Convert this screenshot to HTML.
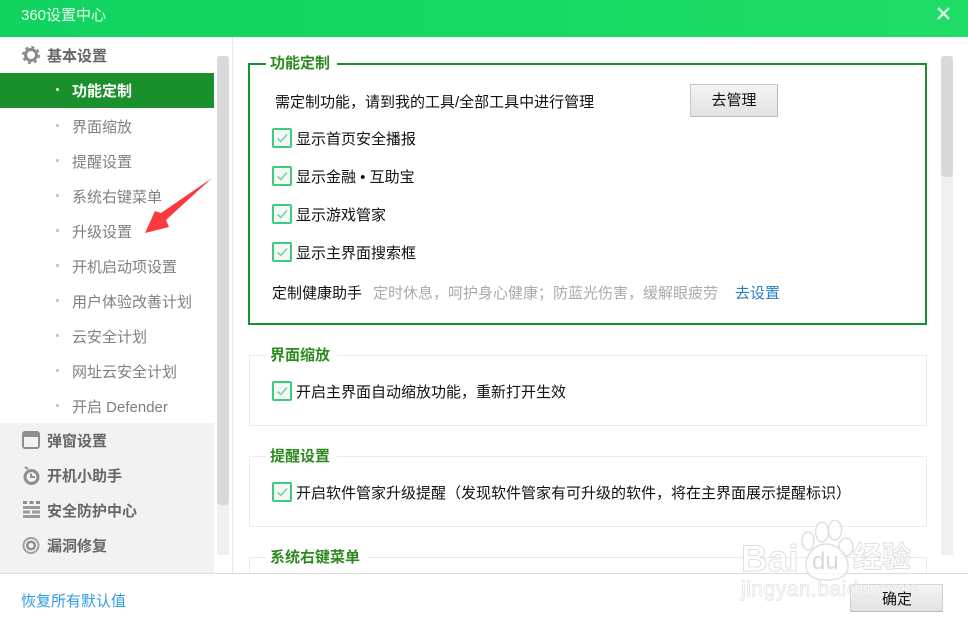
<!DOCTYPE html>
<html lang="zh-CN">
<head>
<meta charset="utf-8">
<style>
html,body{margin:0;padding:0;width:968px;height:622px;overflow:hidden;background:#fff}
body{position:relative;font-family:"Liberation Sans","Noto Sans CJK SC",sans-serif;font-size:15px;color:#111}
.a{position:absolute;white-space:nowrap;line-height:20px}
.r{position:absolute}
.s{color:#7f7f7f;left:72px}
.d{position:absolute;left:56px;width:3px;height:3px;background:#c4c4c4;border-radius:1px}
.h{left:47px;color:#666;font-weight:bold}
.lg{color:#2c8a1e;font-weight:bold;background:#fff;padding:0 7px 0 4px;left:266px}
.box{position:absolute;left:249px;width:676px;border:1px solid #ececec;box-sizing:content-box}
.c{position:absolute;left:272px;width:16px;height:16px;border:2px solid #3ecb7c;border-radius:2px;background:#f7f7f7}
.c svg{position:absolute;left:2px;top:2px}
.t{left:296px}
.btn{position:absolute;box-sizing:border-box;border:1px solid #c4c4c4;background:linear-gradient(#f4f4f4,#e2e2e2);text-align:center;border-radius:1px}
.w{color:rgba(255,255,255,.75);-webkit-text-stroke:1px #e0e0e0}
</style>
</head>
<body>
<div class="r" style="left:0;top:0;width:968px;height:37px;background:linear-gradient(90deg,#10d45f 0%,#15d862 50%,#1fdd66 100%)"></div>
<div class="a" style="left:21px;top:6px;color:#e8fff0">360设置中心</div>
<svg class="r" style="left:936px;top:6px" width="15" height="15" viewBox="0 0 15 15"><path d="M2 2L13 13M13 2L2 13" stroke="#d8f8e4" stroke-width="2.4" fill="none"/></svg>

<!-- sidebar -->
<div class="r" style="left:0;top:423px;width:214px;height:150px;background:#f2f2f2"></div>
<div class="r" style="left:0;top:73px;width:214px;height:35px;background:#19902c"></div>
<div class="r" style="left:217px;top:56px;width:12px;height:499px;background:#f0f0f0"></div>
<div class="r" style="left:217px;top:56px;width:12px;height:449px;background:#d9d9d9;border-radius:4px"></div>
<div class="r" style="left:232px;top:37px;width:1px;height:536px;background:#e8e8e8"></div>

<svg class="r" style="left:22px;top:46px" width="18" height="18" viewBox="0 0 18 18"><circle cx="9" cy="9" r="5.5" fill="none" stroke="#8a8a8a" stroke-width="3"/><circle cx="9" cy="9" r="8" fill="none" stroke="#8a8a8a" stroke-width="2" stroke-dasharray="3 3.3"/></svg>
<div class="a h" style="top:47px">基本设置</div>
<div class="d" style="top:88px;background:#ddd"></div>
<div class="a" style="left:72px;top:82px;color:#fff;font-weight:bold">功能定制</div>
<div class="d" style="top:124px"></div><div class="a s" style="top:118px">界面缩放</div>
<div class="d" style="top:159px"></div><div class="a s" style="top:153px">提醒设置</div>
<div class="d" style="top:194px"></div><div class="a s" style="top:188px">系统右键菜单</div>
<div class="d" style="top:229px"></div><div class="a s" style="top:223px">升级设置</div>
<div class="d" style="top:264px"></div><div class="a s" style="top:258px">开机启动项设置</div>
<div class="d" style="top:299px"></div><div class="a s" style="top:293px">用户体验改善计划</div>
<div class="d" style="top:334px"></div><div class="a s" style="top:328px">云安全计划</div>
<div class="d" style="top:369px"></div><div class="a s" style="top:363px">网址云安全计划</div>
<div class="d" style="top:404px"></div><div class="a s" style="top:398px">开启 Defender</div>

<svg class="r" style="left:22px;top:431px" width="18" height="18" viewBox="0 0 18 18"><rect x="1" y="1" width="16" height="16" rx="2" fill="none" stroke="#8f8f8f" stroke-width="2"/><rect x="1" y="1" width="16" height="5" fill="#8f8f8f"/></svg>
<div class="a h" style="top:432px">弹窗设置</div>
<svg class="r" style="left:22px;top:466px" width="18" height="19" viewBox="0 0 18 19"><circle cx="9.500" cy="11" r="6.500" fill="none" stroke="#8f8f8f" stroke-width="3"/><path d="M3 1L6 3M9 7.500V11h4" stroke="#8f8f8f" stroke-width="2" fill="none"/></svg>
<div class="a h" style="top:467px">开机小助手</div>
<svg class="r" style="left:23px;top:501px" width="17" height="18" viewBox="0 0 17 18"><path d="M0 1.500h4M6.500 1.500h4M13 1.500h4" stroke="#8f8f8f" stroke-width="3" fill="none"/><path d="M0 5h17v3H0zM0 9.500h7v3H0zM9 9.500h8v3H9zM0 14h17v3H0z" fill="#9a9a9a"/></svg>
<div class="a h" style="top:502px">安全防护中心</div>
<svg class="r" style="left:22px;top:536px" width="18" height="19" viewBox="0 0 18 19"><circle cx="9" cy="9.500" r="7.500" fill="none" stroke="#a0a0a0" stroke-width="2"/><circle cx="9" cy="9.500" r="3.800" fill="none" stroke="#8f8f8f" stroke-width="2.500"/></svg>
<div class="a h" style="top:537px">漏洞修复</div>

<!-- arrow -->
<svg class="r" style="left:0;top:0" width="240" height="240" viewBox="0 0 240 240"><path d="M212 178L161 213L155 211L145 233L169 227L166 220Z" fill="#fb3a3f"/></svg>

<!-- main -->
<div class="r" style="left:248px;top:63px;width:675px;height:258px;border:2px solid #19902c"></div>
<div class="a lg" style="top:54px">功能定制</div>
<div class="a" style="left:275px;top:93px">需定制功能，请到我的工具/全部工具中进行管理</div>
<div class="btn" style="left:690px;top:84px;width:88px;height:33px;line-height:31px;border-color:#c8c8c8 #bbb #bbb #c8c8c8">去管理</div>

<div class="c" style="top:128px"><svg width="12" height="12" viewBox="0 0 12 12"><path d="M1.500 6.500L4.800 9.500L11 2.500" stroke="#6bdc98" stroke-width="1.600" fill="none"/></svg></div>
<div class="a t" style="top:130px">显示首页安全播报</div>
<div class="c" style="top:166px"><svg width="12" height="12" viewBox="0 0 12 12"><path d="M1.500 6.500L4.800 9.500L11 2.500" stroke="#6bdc98" stroke-width="1.600" fill="none"/></svg></div>
<div class="a t" style="top:168px">显示金融 • 互助宝</div>
<div class="c" style="top:204px"><svg width="12" height="12" viewBox="0 0 12 12"><path d="M1.500 6.500L4.800 9.500L11 2.500" stroke="#6bdc98" stroke-width="1.600" fill="none"/></svg></div>
<div class="a t" style="top:206px">显示游戏管家</div>
<div class="c" style="top:242px"><svg width="12" height="12" viewBox="0 0 12 12"><path d="M1.500 6.500L4.800 9.500L11 2.500" stroke="#6bdc98" stroke-width="1.600" fill="none"/></svg></div>
<div class="a t" style="top:244px">显示主界面搜索框</div>
<div class="a" style="left:272px;top:284px">定制健康助手</div>
<div class="a" style="left:373px;top:284px;color:#aaa">定时休息，呵护身心健康；防蓝光伤害，缓解眼疲劳</div>
<div class="a" style="left:735px;top:284px;color:#2a7fc4">去设置</div>

<div class="box" style="top:355px;height:69px"></div>
<div class="a lg" style="top:346px">界面缩放</div>
<div class="c" style="top:381px"><svg width="12" height="12" viewBox="0 0 12 12"><path d="M1.500 6.500L4.800 9.500L11 2.500" stroke="#6bdc98" stroke-width="1.600" fill="none"/></svg></div>
<div class="a t" style="top:383px">开启主界面自动缩放功能，重新打开生效</div>

<div class="box" style="top:456px;height:69px"></div>
<div class="a lg" style="top:447px">提醒设置</div>
<div class="c" style="top:482px"><svg width="12" height="12" viewBox="0 0 12 12"><path d="M1.500 6.500L4.800 9.500L11 2.500" stroke="#6bdc98" stroke-width="1.600" fill="none"/></svg></div>
<div class="a t" style="top:484px">开启软件管家升级提醒（发现软件管家有可升级的软件，将在主界面展示提醒标识）</div>

<div class="box" style="top:557px;height:30px"></div>
<div class="a lg" style="top:548px">系统右键菜单</div>

<!-- main scrollbar -->
<div class="r" style="left:941px;top:56px;width:12px;height:499px;background:#f0f0f0"></div>
<div class="r" style="left:941px;top:56px;width:12px;height:121px;background:#d9d9d9;border-radius:4px"></div>

<!-- footer -->
<div class="r" style="left:0;top:573px;width:968px;height:49px;background:#fff;border-top:1px solid #dcdcdc;box-sizing:border-box"></div>
<div class="a" style="left:21px;top:592px;color:#2e9be6">恢复所有默认值</div>
<div class="btn" style="left:850px;top:584px;width:93px;height:28px;border-color:#d4d4d4 #ccc #bbb #ccc"></div>

<!-- watermark -->
<div class="a w" style="left:741px;top:538px;font-size:37px;line-height:42px;font-weight:bold">Bai</div>
<svg class="r" style="left:800px;top:520px" width="56" height="62" viewBox="0 0 56 62"><g fill="rgba(255,255,255,.75)" stroke="#e0e0e0" stroke-width="1.500"><ellipse cx="8" cy="21" rx="6" ry="9"/><ellipse cx="22" cy="12" rx="6.500" ry="10"/><ellipse cx="35" cy="10" rx="6.500" ry="10"/><ellipse cx="46" cy="27" rx="7" ry="9"/><path d="M6 45C6 33 16 24 26 24C38 24 49 36 48 48C47 58 36 60 26 60C14 60 6 56 6 45Z"/></g></svg>
<div class="a" style="left:812px;top:549px;font-size:24px;line-height:26px;color:#dadada">du</div>
<div class="a w" style="left:853px;top:541px;font-size:29px;line-height:34px;font-weight:bold">经验</div>
<div class="a w" style="left:741px;top:577px;font-size:21px;line-height:26px;letter-spacing:.5px;-webkit-text-stroke:.7px #e0e0e0">jingyan.baidu.com</div>
<div class="a" style="left:882px;top:590px">确定</div>
</body>
</html>
